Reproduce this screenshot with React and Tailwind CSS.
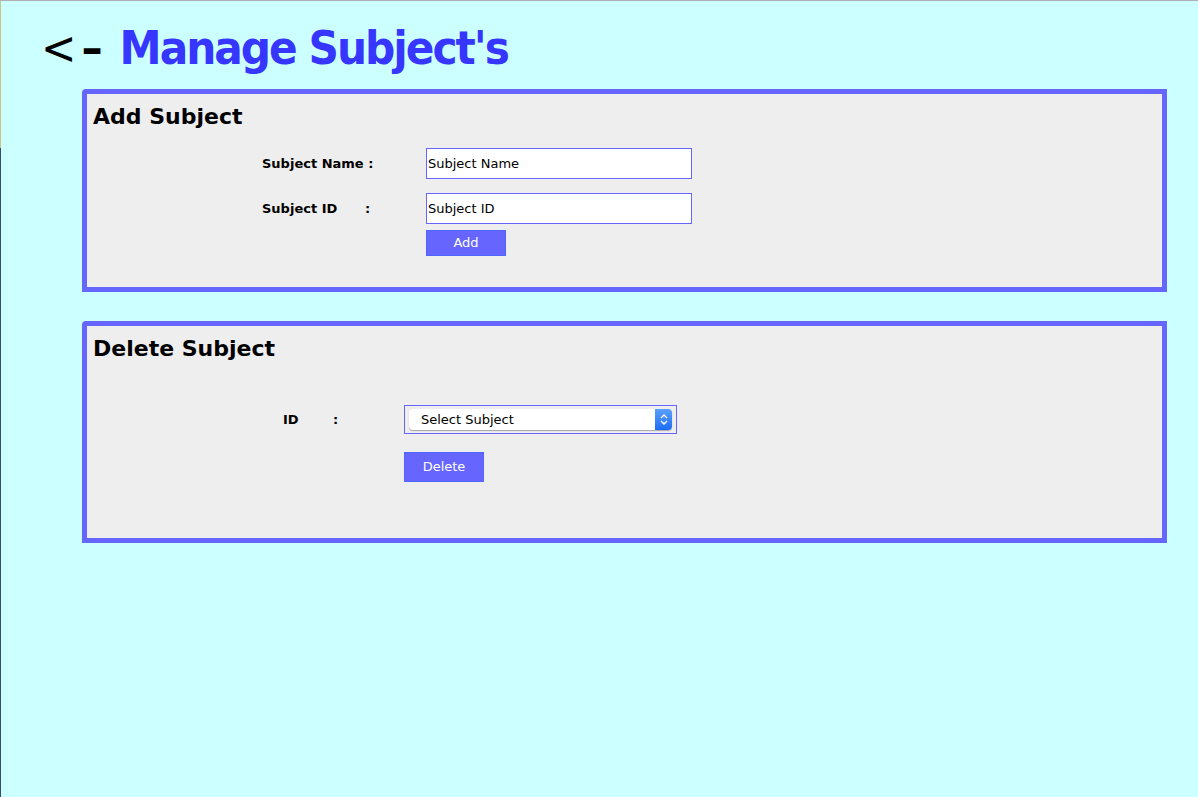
export default function App() {
  const font = { fontFamily: '"DejaVu Sans", Verdana, sans-serif' };
  const titleFont = { fontFamily: '"DejaVu Sans Condensed", "DejaVu Sans", sans-serif' };
  return (
    <div className="flex min-h-[797px] w-full bg-[#ccffff] border-t border-[#b0b0b0]" style={font}>
      <div className="flex w-px flex-col">
        <div className="h-[147px] bg-[#c8c48a]" />
        <div className="flex-1 bg-[#3a4a6a]" />
      </div>
      <div className="flex-1">
        <h1 className="flex items-baseline pl-[40px] pt-[20px] text-[47px] leading-[54px]" style={titleFont}>
          <span className="text-black">&lt;</span>
          <span className="ml-[5px] font-bold text-black">–</span>
          <span className="ml-[17px] font-bold tracking-[-2px] text-[#3636ff]">Manage Subject's</span>
        </h1>

        <div className="ml-[81px] mt-[14px] w-[1085px]">
          <section className="h-[203px] rounded-tl-[4px] border-[5px] border-[#6666ff] bg-[#eeeeee] pl-[6px] pt-[8px]">
            <h2 className="text-[22px] font-bold leading-[30px] text-black">Add Subject</h2>
            <div className="ml-[169px] mt-[16px] flex flex-col">
              <div className="flex items-center">
                <span className="w-[164px] text-[13px] font-bold">Subject Name :</span>
                <div className="flex h-[31px] w-[266px] items-center border border-[#6666ff] bg-white pl-px text-[13px]">
                  Subject Name
                </div>
              </div>
              <div className="mt-[14px] flex items-center">
                <span className="flex w-[164px] text-[13px] font-bold">
                  <span className="w-[103px]">Subject ID</span>
                  <span>:</span>
                </span>
                <div className="flex h-[31px] w-[266px] items-center border border-[#6666ff] bg-white pl-px text-[13px]">
                  Subject ID
                </div>
              </div>
              <button className="ml-[164px] mt-[6px] h-[26px] w-[80px] border border-[#4d66ff] bg-[#6666ff] text-[13px] text-white">
                Add
              </button>
            </div>
          </section>

          <section className="mt-[29px] h-[222px] rounded-tl-[4px] border-[5px] border-[#6666ff] bg-[#eeeeee] pl-[6px] pt-[8px]">
            <h2 className="text-[22px] font-bold leading-[30px] text-black">Delete Subject</h2>
            <div className="ml-[190px] mt-[41px] flex flex-col">
              <div className="flex items-center">
                <span className="flex w-[121px] text-[13px] font-bold">
                  <span className="w-[50px]">ID</span>
                  <span>:</span>
                </span>
                <div className="flex h-[29px] w-[273px] items-center border border-[#6666ff] px-[4px]">
                  <div className="flex h-[21px] flex-1 items-center rounded-[4px] bg-white shadow-[0_1px_1px_rgba(0,0,0,0.3)]">
                    <span className="flex-1 pl-[12px] text-[13px]">Select Subject</span>
                    <span className="flex h-[21px] w-[17px] items-center justify-center rounded-r-[4px] bg-gradient-to-b from-[#5aa0ff] to-[#1a6cf5]">
                      <svg width="8" height="13" viewBox="0 0 8 13" fill="none" stroke="white" strokeWidth="1.4">
                        <path d="M1 5 L4 2 L7 5" />
                        <path d="M1 8 L4 11 L7 8" />
                      </svg>
                    </span>
                  </div>
                </div>
              </div>
              <button className="ml-[121px] mt-[18px] h-[30px] w-[80px] border border-[#4d66ff] bg-[#6666ff] text-[13px] text-white">
                Delete
              </button>
            </div>
          </section>
        </div>
      </div>
    </div>
  );
}
